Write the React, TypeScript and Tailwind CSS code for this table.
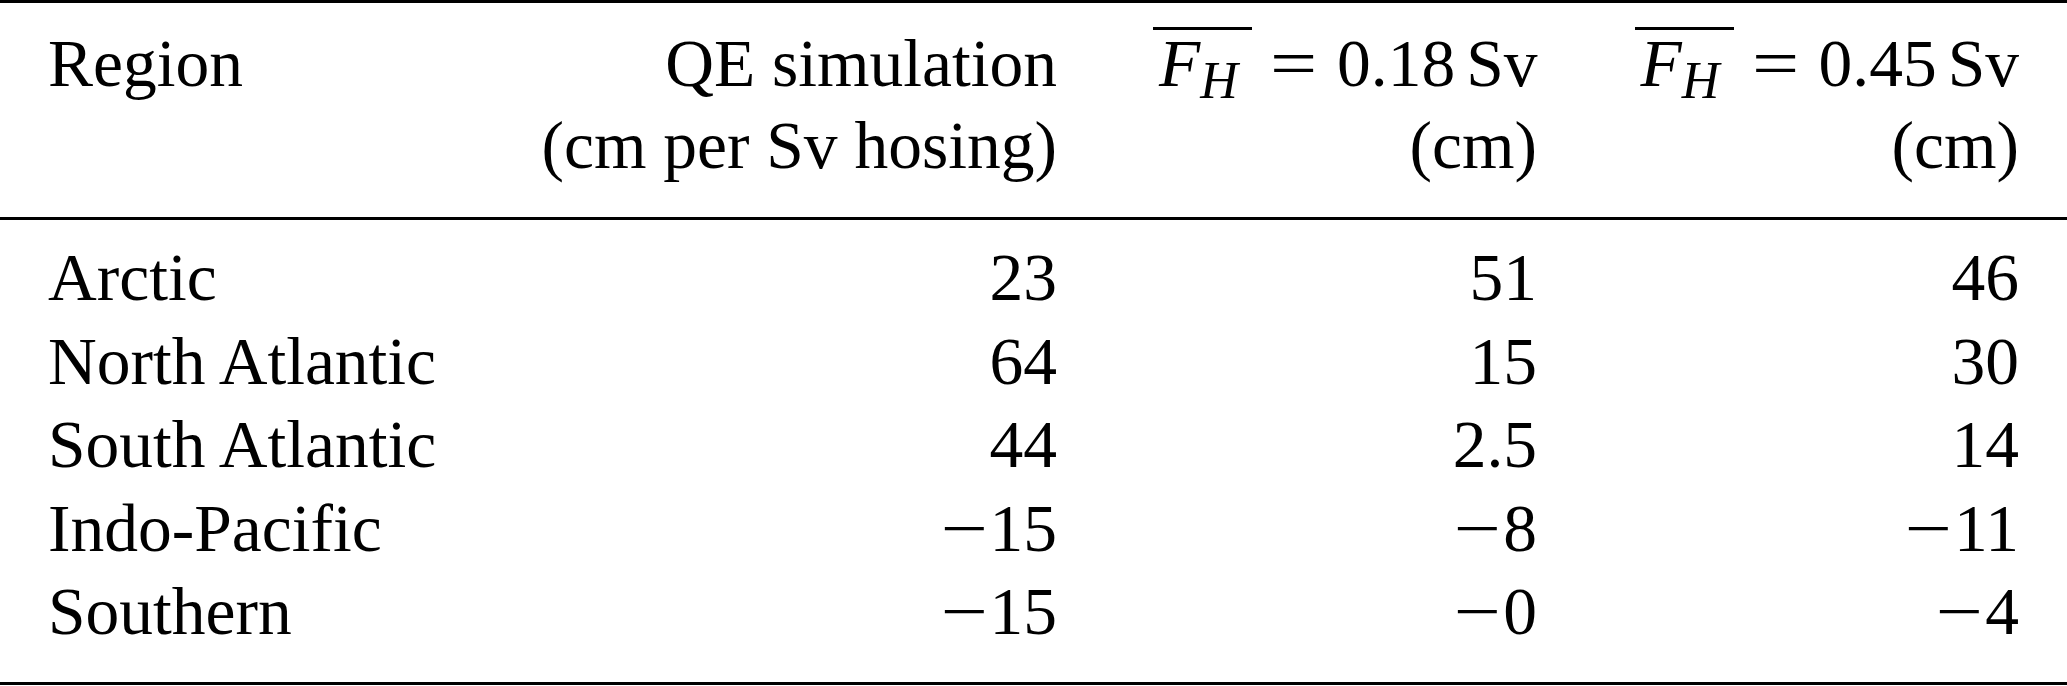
import React from "react";

const rows: string[][] = [
  ["Arctic", "23", "51", "46"],
  ["North Atlantic", "64", "15", "30"],
  ["South Atlantic", "44", "2.5", "14"],
  ["Indo-Pacific", "-15", "-8", "-11"],
  ["Southern", "-15", "-0", "-4"],
];

function Num({ v }: { v: string }) {
  if (v.startsWith("-")) {
    return (
      <span>
        <span className="inline-block w-[52px] text-center scale-x-[1.24]">{"\u2212"}</span>
        {v.slice(1)}
      </span>
    );
  }
  return <span>{v}</span>;
}

function FH({ value }: { value: string }) {
  return (
    <span className="whitespace-nowrap">
      <span className="inline-block w-[99px] border-t-[3px] border-black pl-[6px] text-left leading-none">
        <span className="italic">F</span>
        <span className="relative top-[12px] text-[52px] italic">H</span>
      </span>
      <span className="ml-[18px] inline-block w-[47px] text-center scale-x-[1.24]">=</span>
      <span className="ml-[20px]">{value}</span>
      <span className="ml-[11px]">Sv</span>
    </span>
  );
}

export default function App() {
  return (
    <div className="w-[2067px] h-[686px] bg-white text-black font-['Liberation_Serif',_'Times_New_Roman',_serif] text-[67.5px]">
      <div className="border-t-[3px] border-black">
        <div className="grid grid-cols-[490px_615px_480px_482px] pt-[20px] pb-[30px] leading-[82px]">
          <div className="px-[48px] text-left">
            <div>Region</div>
          </div>
          <div className="px-[48px] text-right whitespace-nowrap">
            <div>QE simulation</div>
            <div>(cm per Sv hosing)</div>
          </div>
          <div className="px-[48px] text-right">
            <div>
              <FH value="0.18" />
            </div>
            <div>(cm)</div>
          </div>
          <div className="px-[48px] text-right">
            <div>
              <FH value="0.45" />
            </div>
            <div>(cm)</div>
          </div>
        </div>
        <div className="h-[3px] bg-black" />
        <div className="grid grid-cols-[490px_615px_480px_482px] pt-[16px] pb-[28px] leading-[83.5px]">
          {rows.map((r) => (
            <React.Fragment key={r[0]}>
              <div className="px-[48px] text-left whitespace-nowrap">{r[0]}</div>
              <div className="px-[48px] text-right">
                <Num v={r[1]} />
              </div>
              <div className="px-[48px] text-right">
                <Num v={r[2]} />
              </div>
              <div className="px-[48px] text-right">
                <Num v={r[3]} />
              </div>
            </React.Fragment>
          ))}
        </div>
        <div className="h-[3px] bg-black" />
      </div>
    </div>
  );
}
